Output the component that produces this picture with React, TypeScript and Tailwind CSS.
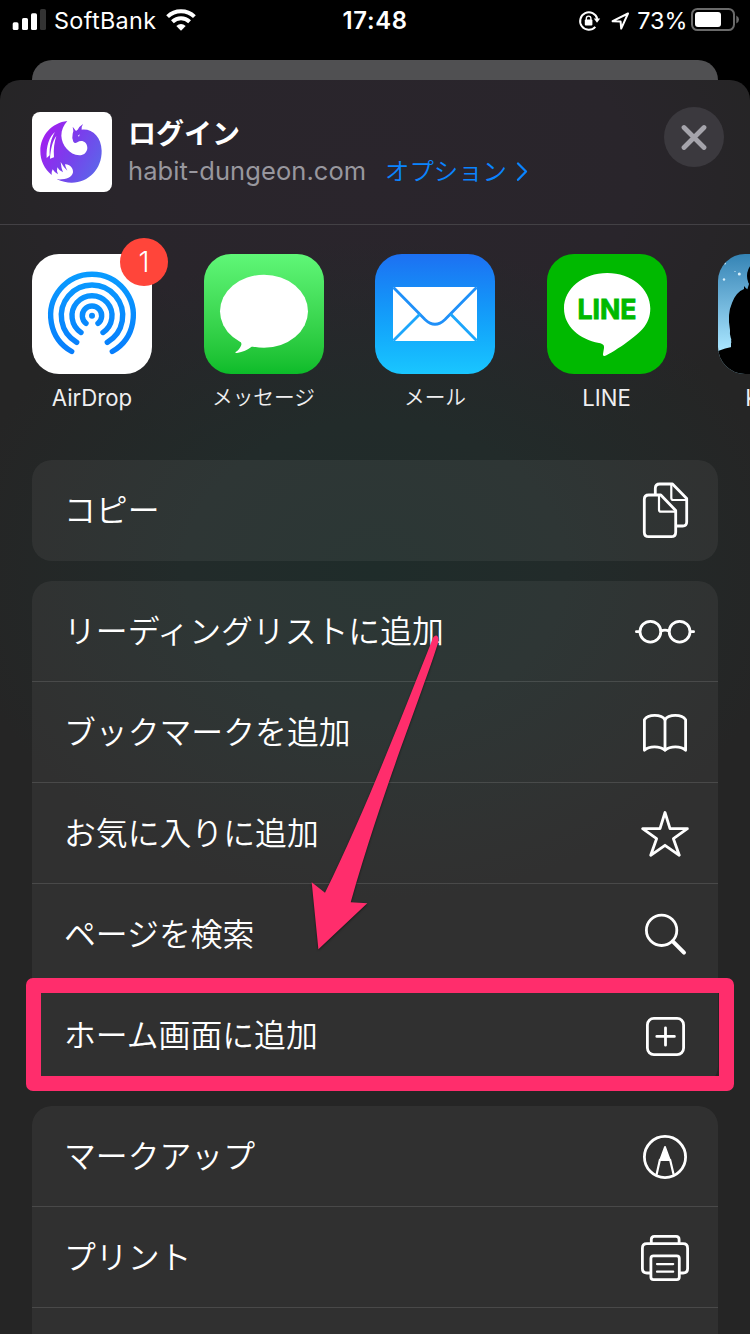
import type { ReactNode } from 'react';

function Icon({ children }: { children: ReactNode }) {
  return (
    <svg
      viewBox="0 0 60 60"
      className="size-[60px] shrink-0"
      fill="none"
      stroke="#fff"
      strokeWidth="2.8"
      strokeLinecap="round"
      strokeLinejoin="round"
    >
      {children}
    </svg>
  );
}

const CopyIcon = () => (
  <Icon>
    <path d="M20.3 14V8.5Q20.3 4 24.8 4H37.5L51.7 18.5V42Q51.7 46 47.7 46H42" />
    <path d="M36.3 4.5V18Q36.3 20 38.3 20H51" strokeWidth="2.2" />
    <path d="M13.8 15H25.8L40.7 30.5V52.2Q40.7 56.7 36.2 56.7H13.8Q9.3 56.7 9.3 52.2V19.5Q9.3 15 13.8 15Z" />
    <path d="M24 15.5V29.7Q24 31.7 26 31.7H40" strokeWidth="2.2" />
  </Icon>
);

const GlassesIcon = () => (
  <Icon>
    <circle cx="15.4" cy="30.7" r="10.4" />
    <circle cx="44.6" cy="30.7" r="10.4" />
    <path d="M26 30Q30 28.2 34 30M1.4 30.7H4.5M55.5 30.7H58.6" />
  </Icon>
);

const BookIcon = () => (
  <Icon>
    <path d="M30 17.8C26.5 12 13 12 9.4 17.8V48.3C14 43.8 25 43.8 30 48.3C35 43.8 46 43.8 50.6 48.3V17.8C47 12 33.5 12 30 17.8Z" />
    <path d="M30 17.8V48" />
  </Icon>
);

const StarIcon = () => (
  <Icon>
    <path d="M30 9.5L35 25.7H52.4L38.4 35.7L44.3 52.3L30 42.3L15.7 52.3L21.6 35.7L7.6 25.7H25Z" />
  </Icon>
);

const SearchIcon = () => (
  <Icon>
    <circle cx="26.6" cy="26.3" r="15.2" />
    <path d="M37.8 37.4L49 48.7" strokeWidth="4" />
  </Icon>
);

const AddIcon = () => (
  <Icon>
    <rect x="12.4" y="13.4" width="36.2" height="36.2" rx="6.5" />
    <path d="M30.5 22.8V40.2M21.8 31.4H39.4" />
  </Icon>
);

const MarkupIcon = () => (
  <Icon>
    <circle cx="30" cy="31" r="20.6" />
    <path d="M30 21L34.4 33H25.6Z" fill="#fff" strokeWidth="2" />
    <path d="M21.6 48.5L24.9 33.8H35.1L38.6 48.5" strokeWidth="2.2" />
  </Icon>
);

const PrintIcon = () => (
  <Icon>
    <path d="M16.3 16V12.4Q16.3 9.3 19.4 9.3H41Q44.1 9.3 44.1 12.4V16" />
    <path d="M15 46H11.9Q7.4 46 7.4 41.5V21.2Q7.4 16.7 11.9 16.7H48.1Q52.6 16.7 52.6 21.2V41.5Q52.6 46 48.1 46H45.5" />
    <rect x="15.9" y="28.9" width="28.4" height="23.8" rx="2.6" />
    <path d="M22 37.1H38.2M22 44.7H38.2" strokeWidth="2.2" />
  </Icon>
);

type Item = { label: string; icon: ReactNode };

const groups: Item[][] = [
  [{ label: 'コピー', icon: <CopyIcon /> }],
  [
    { label: 'リーディングリストに追加', icon: <GlassesIcon /> },
    { label: 'ブックマークを追加', icon: <BookIcon /> },
    { label: 'お気に入りに追加', icon: <StarIcon /> },
    { label: 'ページを検索', icon: <SearchIcon /> },
    { label: 'ホーム画面に追加', icon: <AddIcon /> },
  ],
  [
    { label: 'マークアップ', icon: <MarkupIcon /> },
    { label: 'プリント', icon: <PrintIcon /> },
    { label: '', icon: null },
  ],
];

function Group({ items }: { items: Item[] }) {
  return (
    <div className="shrink-0 overflow-hidden rounded-[20px] bg-white/[0.055]">
      {items.map((item, i) => (
        <div
          key={i}
          className="flex h-[101px] items-center justify-between border-b border-white/[0.12] pr-[23px] pl-[32px] last:border-transparent"
        >
          <span className="pt-[2px] text-[31.85px] font-[350] whitespace-nowrap text-white">{item.label}</span>
          {item.icon}
        </div>
      ))}
    </div>
  );
}

function StatusBar() {
  return (
    <div className="flex h-[40px] shrink-0 items-center text-white">
      <svg viewBox="0 0 54 40" className="h-10 w-[54px] shrink-0" fill="#fff">
        <rect x="12.7" y="22.3" width="5.8" height="7.7" rx="1.6" />
        <rect x="22" y="18" width="6" height="12" rx="1.6" />
        <rect x="31" y="13.2" width="6" height="16.8" rx="1.6" />
        <rect x="40" y="9" width="6" height="21" rx="1.6" fill="#333" />
      </svg>
      <span className="w-[112px] pt-[2px] text-[23.4px] tracking-[0.35px]">SoftBank</span>
      <svg viewBox="0 0 30 22" className="h-[22px] w-[30px] shrink-0" fill="none" stroke="#fff">
        <path d="M1.6 7.6C9 .4 21 .4 28.4 7.6" strokeWidth="4" />
        <path d="M6.4 12.7C11.4 8 18.6 8 23.6 12.7" strokeWidth="4" />
        <path d="M10.3 16.9Q15 12.9 19.7 16.9L15 21.8Z" fill="#fff" stroke="none" />
      </svg>
      <span className="ml-[147px] w-[89px] pt-[2px] text-[23.8px] font-semibold tracking-[0.7px]">17:48</span>
      <svg viewBox="573 0 64 40" className="ml-[142px] h-10 w-[64px] shrink-0" fill="none" stroke="#fff">
        <path d="M595.3 26.9A8.7 8.7 0 1 1 597.3 19" strokeWidth="2" />
        <path d="M593.8 18.4H600.2L597 22.8Z" fill="#fff" stroke="none" />
        <rect x="584.8" y="19.4" width="7.6" height="6" rx="1" fill="#fff" stroke="none" />
        <path d="M586.3 20V18.4A2.3 2.3 0 0 1 590.9 18.4V20" strokeWidth="1.4" />
        <path d="M628 13.5L612.6 21.2L620.6 21.5L621.2 28.6Z" strokeWidth="2" strokeLinejoin="round" />
      </svg>
      <span className="w-[53px] pt-[2px] text-[23.4px]">73%</span>
      <svg viewBox="690 0 60 40" className="h-10 w-[60px] shrink-0">
        <rect x="692" y="9" width="42" height="21" rx="5.4" fill="none" stroke="#6a6a6a" strokeWidth="2" />
        <rect x="695" y="12" width="26" height="15" rx="3" fill="#fff" />
        <path d="M736.3 15.6Q739 17 739 19.5T736.3 23.4Z" fill="#6a6a6a" />
      </svg>
    </div>
  );
}

function SiteLogo() {
  return (
    <svg viewBox="30 30 240 240" className="size-[80px] shrink-0 rounded-[8px] bg-white">
      <defs>
        <linearGradient id="dragon" x1="0" y1="0.2" x2="1" y2="0.75">
          <stop offset="0" stopColor="#a51df0" />
          <stop offset="0.5" stopColor="#7a3eec" />
          <stop offset="1" stopColor="#5c66ea" />
        </linearGradient>
      </defs>
      <path
        fill="url(#dragon)"
        d="M136 57C90 62 55 100 55 147C55 176 67 200 89 219Q88 209 92 202Q97 211 108 217Q103 206 106 196Q112 207 123 211Q118 200 116 180Q124 195 136 206Q130 195 129 187C143 186 154 198 153 211C150 228 128 234 104 232C120 239 134 242 149 242C200 242 240 200 239 146C238 104 210 79 179 83Q177 76 183 66Q171 74 167 83L162 87L152 74Q156 87 152 95Q149 106 154 119Q158 126 166 121C178 112 196 119 196 138C195 152 185 160 172 160C142 158 119 129 118 101C118 84 125 70 136 57Z"
      />
      <path
        fill="#fff"
        d="M99 90C82 104 72 132 74 168L83 160C82 132 87 110 99 90ZM103 102C91 118 86 142 84 170L96 166C94 140 97 120 103 102ZM168 101L173 97L171 104Z"
      />
    </svg>
  );
}

function AirDropArt() {
  return (
    <svg viewBox="0 0 120 120" className="size-[120px]" fill="none" stroke="url(#airdrop)" strokeWidth="5.4" strokeLinecap="round">
      <defs>
        <linearGradient id="airdrop" gradientUnits="userSpaceOnUse" x1="0" y1="18" x2="0" y2="100">
          <stop offset="0" stopColor="#0a9cff" />
          <stop offset="1" stopColor="#077dfc" />
        </linearGradient>
      </defs>
      <path d="M39.7 97.5A41.3 41.3 0 1 1 80.3 97.5" />
      <path d="M44.7 88.3A30.7 30.7 0 1 1 75.3 88.3" />
      <path d="M49 78.4A20 20 0 1 1 71 78.4" />
      <path d="M54 69.3A9.7 9.7 0 1 1 66 69.3" />
      <circle cx="60" cy="61.7" r="3" fill="#0a8cff" stroke="none" />
    </svg>
  );
}

function MessageArt() {
  return (
    <svg viewBox="0 0 120 120" className="size-[120px]" fill="#fff">
      <ellipse cx="60" cy="57.2" rx="44" ry="36.5" />
      <path d="M34 84Q38 88 37.3 91Q35.5 96 31.2 98.3Q31.5 99.3 33 99Q41.5 97.5 48 92.5L60 90L40 80Z" />
    </svg>
  );
}

function MailArt() {
  return (
    <svg viewBox="0 0 120 120" className="size-[120px]">
      <rect x="18" y="33" width="84" height="54" rx="2" fill="#fff" />
      <path d="M18.5 33.5L50 65.5Q60 75 70 65.5L101.5 33.5" fill="none" stroke="#1f90f8" strokeWidth="2.8" />
      <path d="M45 60L18.5 86.5M75.5 60L101.5 86.5" fill="none" stroke="#1da6fb" strokeWidth="2.8" />
    </svg>
  );
}

function LineArt() {
  return (
    <svg viewBox="0 0 120 120" className="size-[120px]">
      <path
        fill="#fff"
        d="M60.2 19C36 19 17 34.5 17 54.5C17 72 32.5 85.5 52 89C56 89.8 57.3 91 57 94L56 100C55.8 102 57.3 102.6 59 101.6C66 98 86 85.5 95.5 75C101 69 103.3 62 103.3 54.5C103.3 34.5 84.3 19 60.2 19Z"
      />
      <text x="30.5" y="65" fontSize="27.5" fontWeight="700" fill="#00b900" stroke="#00b900" strokeWidth="0.9" textLength="59" lengthAdjust="spacingAndGlyphs">
        LINE
      </text>
    </svg>
  );
}

function KindleArt() {
  return (
    <svg viewBox="0 0 120 120" className="size-[120px]">
      <path d="M0 97Q18 90 40 92H120V120H0Z" />
      <circle cx="46" cy="22" r="17" />
      <path d="M26 32Q29 36 32 36V94H13V88L17 91Q11 84 12 76Q9 60 14 49Q18 38 26 35Z" />
      <path d="M31 30H80V96H17L13 87Z" />
      <g fill="#d9f0fb">
        <circle cx="6" cy="25.5" r="1.2" />
        <circle cx="7" cy="9.5" r="0.9" />
        <circle cx="21.3" cy="20" r="1.5" />
        <circle cx="17" cy="17.5" r="0.6" />
      </g>
    </svg>
  );
}

const latinLabel = 'text-[22.2px] font-normal';
const kanaLabel = 'text-[20.7px] font-[350]';

const apps = [
  { name: 'AirDrop', art: <AirDropArt />, bg: 'bg-white', label: latinLabel, badge: '1' },
  { name: 'メッセージ', art: <MessageArt />, bg: 'bg-linear-to-b from-[#5ff777] to-[#0bbc29]', label: kanaLabel },
  { name: 'メール', art: <MailArt />, bg: 'bg-linear-to-b from-[#1d70f2] to-[#1ac6ff]', label: kanaLabel },
  { name: 'LINE', art: <LineArt />, bg: 'bg-[#00b900]', label: latinLabel },
  { name: 'Kindle', art: <KindleArt />, bg: 'bg-linear-to-b from-[#3484b5] to-[#a9e6ff] to-80%', label: latinLabel },
];

export default function App() {
  return (
    <div className="relative flex h-[1334px] w-[750px] flex-col overflow-hidden bg-black font-[Inter,'Noto_Sans_CJK_JP',sans-serif]">
      <StatusBar />
      <div className="mx-[32px] mt-[20px] h-[20px] shrink-0 rounded-t-[20px] bg-[#505052]" />
      <div className="flex min-h-0 flex-1 flex-col overflow-hidden rounded-t-[20px] bg-[#252525] bg-[radial-gradient(ellipse_420px_330px_at_375px_490px,#1f2c2a_0%,#222b2a_45%,transparent_100%),radial-gradient(ellipse_430px_300px_at_375px_100px,#2a252c_0%,#29252b_60%,transparent_100%)]">
        <header className="flex h-[145px] shrink-0 items-start border-b border-[#434145] pt-[32px] pr-[26px] pl-[32px]">
          <SiteLogo />
          <div className="ml-[16px] flex flex-col">
            <span className="h-[40px] pt-[2px] text-[28px] leading-[40px] font-bold text-white">ログイン</span>
            <div className="flex h-[39px] items-center">
              <span className="w-[257px] text-[25.5px] tracking-[0.08px] text-[#98979e]">habit-dungeon.com</span>
              <span className="text-[24.4px] font-[350] text-[#0a84ff]">オプション</span>
              <svg viewBox="0 0 14 22" className="ml-[7px] h-[22px] w-[14px]" fill="none" stroke="#0a84ff" strokeWidth="2.3" strokeLinecap="round" strokeLinejoin="round">
                <path d="M4 2.5L12 10.5L4 18.8" />
              </svg>
            </div>
          </div>
          <div className="mt-[-5px] ml-auto flex size-[60px] items-center justify-center rounded-full bg-[#3b393e]">
            <svg viewBox="0 0 26 26" className="size-[26px]" stroke="#a5a4ab" strokeWidth="4.8" strokeLinecap="round">
              <path d="M3 3.5L23 23.5M23 3.5L3 23.5" />
            </svg>
          </div>
        </header>
        <div className="flex h-[235px] shrink-0 gap-[51.5px] pt-[29px] pl-[32px]">
          {apps.map((app) => (
            <div key={app.name} className="flex w-[120px] shrink-0 flex-col items-center">
              <div className="relative">
                <div className={`overflow-hidden rounded-[27px] ${app.bg}`}>{app.art}</div>
                {app.badge && (
                  <span className="absolute -top-4 -right-4 flex size-12 items-center justify-center rounded-full bg-[#ff453a] text-[28px] font-light text-white">
                    {app.badge}
                  </span>
                )}
              </div>
              <span className={`mt-[8px] leading-[32px] whitespace-nowrap text-[#efeff0] ${app.label}`}>{app.name}</span>
            </div>
          ))}
        </div>
        <main className="flex flex-col gap-[20px] px-[32px]">
          {groups.map((items, i) => (
            <Group key={i} items={items} />
          ))}
        </main>
      </div>
      <div className="absolute top-[978px] left-[26px] h-[113px] w-[708px] rounded-[7px] border-[15px] border-[#ff2d6c]" />
      <svg viewBox="300 625 150 335" className="absolute top-[625px] left-[300px] h-[335px] w-[150px] drop-shadow-[0_1px_1px_rgba(0,0,0,0.5)]">
        <path
          fill="#ff2d6c"
          d="M433.2 637.5Q436 634 438 637Q439 639 438 643C422 694 382.5 790 350.7 902.3L367.3 903.2L318.4 949.3L311.7 882.2L325 892.7C360 822 392.5 740 433.2 637.5Z"
        />
      </svg>
    </div>
  );
}
